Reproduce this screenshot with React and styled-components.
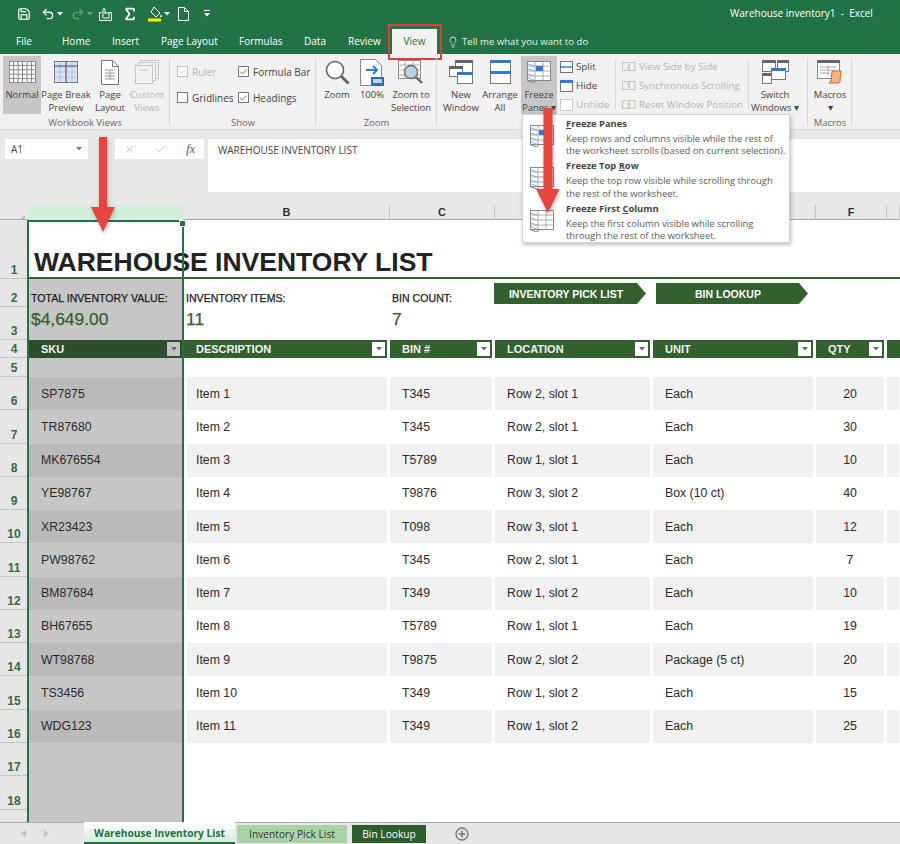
import React from 'react';
import styled, { createGlobalStyle } from 'styled-components';
import { Save, Undo2, Redo2, Sigma, Lightbulb, Check, X } from 'lucide-react';

const UI_FONT = '"Open Sans", "Noto Sans", sans-serif';
const SHEET_FONT = '"Liberation Sans", Arial, sans-serif';
const GREEN = '#217346';
const DARK = '#33602f';
const COLS = '28px 156px 206px 105px 158px 163px 71px 1fr';

const Global = createGlobalStyle`
  html, body { margin: 0; padding: 0; background: #fff; }
  * { box-sizing: border-box; }
`;

const Page = styled.div`
  position: relative;
  width: 900px;
  height: 844px;
  overflow: hidden;
  display: flex;
  flex-direction: column;
  font-family: ${UI_FONT};
  color: #444;
`;

/* title bar */
const TitleBar = styled.div`
  height: 27px;
  background: ${GREEN};
  display: flex;
  align-items: center;
  padding-left: 12px;
  color: #fff;
`;
const Qat = styled.span`
  width: ${p => p.$w}px;
  margin-left: ${p => p.$ml || 0}px;
  display: flex;
  justify-content: center;
  align-items: center;
  opacity: ${p => p.$dim ? 0.35 : 1};
`;
const DocTitle = styled.div`
  position: absolute;
  top: 6px;
  left: 730px;
  font-size: 10px;
  line-height: 14px;
  white-space: pre;
`;

/* tabs */
const TabBar = styled.div`
  height: 27px;
  background: ${GREEN};
  display: flex;
  align-items: flex-end;
  padding-left: 16px;
  font-size: 10px;
  color: #fff;
`;
const Tab = styled.div`
  width: ${p => p.$w}px;
  height: 25px;
  line-height: 24px;
  white-space: nowrap;
  text-align: ${p => p.$active ? 'center' : 'left'};
  background: ${p => p.$active ? '#f1f1f1' : 'transparent'};
  color: ${p => p.$active ? GREEN : '#fff'};
`;
const TellMe = styled.div`
  display: flex;
  align-items: center;
  gap: 3px;
  height: 25px;
  margin-left: 10px;
  font-size: 9.6px;
  color: #e4f0e8;
`;
const RedBox = styled.div`
  position: absolute;
  left: 388px;
  top: 24px;
  width: 54px;
  height: 36px;
  border: 2px solid #e33b3b;
`;

/* ribbon */
const Ribbon = styled.div`
  height: 76px;
  background: #f1f1f1;
  display: flex;
  border-bottom: 1px solid #d6d6d6;
`;
const Group = styled.div`
  width: ${p => p.$w}px;
  height: 75px;
  display: flex;
  flex-direction: column;
  position: relative;
  &::after {
    content: '';
    position: absolute;
    right: 0;
    top: 4px;
    bottom: 3px;
    width: 1px;
    background: #d8d8d8;
  }
`;
const GroupBody = styled.div`
  height: 64px;
  padding: 2px 0 0 ${p => p.$pl || 0}px;
  display: flex;
`;
const GroupLabel = styled.div`
  text-align: center;
  font-size: 9.5px;
  line-height: 13px;
  color: #666;
`;
const BigButton = styled.div`
  width: ${p => p.$w}px;
  height: 58px;
  display: flex;
  flex-direction: column;
  align-items: center;
  background: ${p => p.$on ? '#c6c6c6' : 'transparent'};
  color: ${p => p.$off ? '#b4b4b4' : '#444'};
`;
const BigIcon = styled.div`
  height: 32px;
  display: flex;
  align-items: center;
  justify-content: center;
`;
const BigText = styled.div`
  font-size: 9.5px;
  line-height: 13px;
  text-align: center;
  white-space: pre;
`;
const ChecksCol = styled.div`
  width: ${p => p.$w}px;
  padding-top: 1px;
  display: flex;
  flex-direction: column;
`;
const CheckRow = styled.div`
  height: 26px;
  padding-top: 3px;
  display: flex;
  align-items: center;
  gap: 4px;
  font-size: 10px;
  white-space: nowrap;
  color: ${p => p.$off ? '#b4b4b4' : '#444'};
`;
const Box = styled.span`
  width: 11px;
  height: 11px;
  border: 1px solid ${p => p.$off ? '#c4c4c4' : '#777'};
  background: #fff;
  display: flex;
  align-items: center;
  justify-content: center;
`;
const SmallCol = styled.div`
  width: ${p => p.$w}px;
  padding: 1px 0 0 ${p => p.$pl || 0}px;
  display: flex;
  flex-direction: column;
`;
const SmallRow = styled.div`
  height: 19px;
  display: flex;
  align-items: center;
  gap: 3px;
  font-size: 9.8px;
  white-space: nowrap;
  color: ${p => p.$off ? '#b4b4b4' : '#444'};
`;
const Divider = styled.div`
  width: 1px;
  height: 50px;
  margin-top: 4px;
  background: #dcdcdc;
`;

/* formula bar */
const FormulaArea = styled.div`
  height: 75px;
  background: #e8e8e8;
  padding-top: 9px;
  display: flex;
  align-items: flex-start;
`;
const NameBox = styled.div`
  width: 83px;
  height: 20px;
  margin-left: 5px;
  background: #fff;
  padding: 0 6px 0 6px;
  display: flex;
  align-items: center;
  justify-content: space-between;
  font-size: 10px;
`;
const FxBox = styled.div`
  width: 89px;
  height: 20px;
  margin-left: 27px;
  background: #fff;
  display: flex;
  align-items: center;
  justify-content: space-between;
  padding: 0 9px;
  color: #c4c4c4;
`;
const Fx = styled.span`
  font-family: "Liberation Serif", serif;
  font-style: italic;
  font-size: 12px;
  color: #555;
`;
const FormulaInput = styled.div`
  flex: 1;
  height: 53px;
  margin-left: 4px;
  background: #fff;
  padding: 4px 10px;
  font-size: 10px;
  line-height: 14px;
  color: #444;
`;

/* sheet */
const ColHeads = styled.div`
  height: 15px;
  background: #e8e8e8;
  display: grid;
  grid-template-columns: ${COLS};
  border-bottom: 1px solid #a9a9a9;
`;
const Corner = styled.div`
  padding: 3px 0 0 15px;
`;
const ColHead = styled.div`
  background: ${p => p.$on ? '#d2efdd' : 'transparent'};
  border-right: ${p => p.$on ? 0 : '1px solid #c6c6c6'};
  font-family: ${SHEET_FONT};
  font-size: 11px;
  font-weight: 700;
  line-height: 14px;
  text-align: center;
  color: #333;
`;
const Sheet = styled.div`
  position: relative;
  flex: 1;
  display: flex;
  flex-direction: column;
  background: #fff;
  overflow: hidden;
  font-family: ${SHEET_FONT};
`;
const Row = styled.div`
  height: ${p => p.$h}px;
  flex: ${p => p.$fill ? 1 : 'none'};
  display: grid;
  grid-template-columns: ${COLS};
`;
const RowNum = styled.div`
  background: #e6e6e6;
  border-bottom: ${p => p.$blank ? 0 : '1px solid #c4c4c4'};
  display: flex;
  align-items: flex-end;
  justify-content: center;
  padding-bottom: 1px;
  font-size: 12px;
  font-weight: 700;
  line-height: 14px;
  color: #2f6e44;
`;
const TitleCell = styled.div`
  grid-column: 2 / -1;
  border-bottom: 2px solid ${DARK};
  padding: 0 0 0 6px;
  display: flex;
  align-items: flex-end;
  font-size: 26.5px;
  font-weight: 700;
  line-height: 30px;
  color: #222;
`;
const SelCell = styled.div`
  background: ${p => p.$dark ? '#bababa' : '#c6c6c6'};
  padding-left: ${p => p.$pl || 0}px;
  display: flex;
  align-items: center;
  font-size: 12.3px;
  color: #2b2b2b;
`;
const Summary = styled.div`
  padding: ${p => p.$big ? 2 : 12}px 0 0 ${p => p.$pl || 0}px;
  font-size: ${p => p.$big ? 17.4 : 10.6}px;
  line-height: ${p => p.$big ? 20 : 14}px;
  color: ${p => p.$big ? DARK : '#1c1c1c'};
  -webkit-text-stroke: 0.25px currentColor;
  white-space: nowrap;
  background: ${p => p.$sel ? '#c6c6c6' : 'transparent'};
`;
const Empty = styled.div`
  background: ${p => p.$sel ? '#c6c6c6' : 'transparent'};
`;
const ArrowBtnCell = styled.div`
  padding: 4px 0 2px 0;
`;
const LinkButton = styled.div`
  width: 152px;
  height: 21px;
  clip-path: polygon(0 0, 143px 0, 100% 50%, 143px 100%, 0 100%);
  background: ${DARK};
  color: #fff;
  font-size: 10.5px;
  font-weight: 700;
  line-height: 22px;
  text-align: center;
  padding-right: 8px;
  margin-left: ${p => p.$ml || 0}px;
`;
const HeadCell = styled.div`
  background: ${p => p.$sel ? '#2d4f2c' : DARK};
  margin: 0 ${p => p.$mr === undefined ? 3 : p.$mr}px 0 ${p => p.$ml || 0}px;
  padding: 0 2px 0 ${p => p.$pl === undefined ? 12 : p.$pl}px;
  display: flex;
  align-items: center;
  justify-content: space-between;
  font-size: 11px;
  font-weight: 700;
  color: #f2f2f2;
  white-space: nowrap;
`;
const FilterBtn = styled.span`
  width: 13px;
  height: 14px;
  background: ${p => p.$sel ? '#c4c4c4' : '#fff'};
  display: flex;
  align-items: center;
  justify-content: center;
`;
const DataCell = styled.div`
  background: ${p => p.$band ? '#f1f1f1' : '#fff'};
  margin-right: 3px;
  margin-left: ${p => p.$ml || 0}px;
  padding-left: ${p => p.$center ? 0 : (p.$pl === undefined ? 12 : p.$pl)}px;
  display: flex;
  align-items: center;
  justify-content: ${p => p.$center ? 'center' : 'flex-start'};
  font-size: 12.3px;
  color: #2b2b2b;
  white-space: nowrap;
`;
const Selection = styled.div`
  position: absolute;
  left: 27px;
  top: 0;
  bottom: 0;
  width: 157px;
  border: solid ${GREEN};
  border-width: 2px 2px 0 2px;
  pointer-events: none;
  &::after {
    content: '';
    position: absolute;
    top: -2px;
    right: -4px;
    width: 5px;
    height: 5px;
    background: ${GREEN};
    border: 1px solid #fff;
  }
`;

/* sheet tabs */
const SheetTabs = styled.div`
  height: 22px;
  background: #e6e6e6;
  border-top: 1px solid #ababab;
  display: flex;
  align-items: stretch;
  font-size: 10.2px;
  font-family: ${UI_FONT};
  position: relative;
`;
const NavArrows = styled.div`
  width: 84px;
  padding-left: 21px;
  display: flex;
  align-items: center;
  gap: 18px;
`;
const SheetTab = styled.div`
  width: ${p => p.$w}px;
  margin-left: ${p => p.$ml || 0}px;
  margin-top: ${p => p.$active ? -1 : 2}px;
  margin-bottom: ${p => p.$active ? 0 : 1}px;
  background: ${p => p.$bg};
  color: ${p => p.$color};
  border-bottom: ${p => p.$active ? `2px solid ${GREEN}` : 0};
  font-weight: ${p => p.$active ? 700 : 400};
  text-align: center;
  line-height: ${p => p.$active ? 22 : 19}px;
  white-space: nowrap;
`;
const AddSheet = styled.div`
  margin-left: 29px;
  display: flex;
  align-items: center;
`;

/* dropdown + arrows */
const Menu = styled.div`
  position: absolute;
  left: 522px;
  top: 114px;
  width: 268px;
  height: 129px;
  background: #fff;
  border: 1px solid #d4d4d4;
  box-shadow: 1px 2px 4px rgba(0, 0, 0, 0.25);
  padding-top: 2px;
`;
const MenuItem = styled.div`
  height: 42.4px;
  display: flex;
`;
const MenuIcon = styled.div`
  width: 43px;
  padding: 8px 0 0 7px;
`;
const MenuBody = styled.div`
  font-size: 9.4px;
  line-height: 12.4px;
  color: #5c5c5c;
  white-space: nowrap;
`;
const MenuTitle = styled.div`
  font-weight: 700;
  color: #444;
  line-height: 14px;
  margin-bottom: 2px;
  & u { text-underline-offset: 1px; }
`;
const Arrow = styled.svg`
  position: absolute;
  left: ${p => p.$x}px;
  top: ${p => p.$y}px;
  filter: drop-shadow(1px 2px 2px rgba(0,0,0,.25));
`;

const caret = (color = '#fff') => (
  <svg width="6" height="4" viewBox="0 0 6 4"><path d="M0 0h6L3 3.5z" fill={color} /></svg>
);

function SheetGrid({ w = 27, h = 22, color = '#8a8a8a', fillTop }) {
  const cols = [1, 2, 3, 4, 5].map(i => (w * i) / 6);
  const rows = [1, 2, 3, 4].map(i => (h * i) / 5);
  return (
    <svg width={w} height={h}>
      <rect x=".5" y=".5" width={w - 1} height={h - 1} fill={fillTop || '#fff'} stroke={color} />
      {cols.map(x => <line key={x} x1={x} x2={x} y1="0" y2={h} stroke={color} />)}
      {rows.map(y => <line key={y} y1={y} y2={y} x1="0" x2={w} stroke={color} />)}
    </svg>
  );
}

function PageBreakIcon() {
  return (
    <svg width="24" height="22">
      <rect x=".5" y=".5" width="23" height="21" fill="#d6e4f5" stroke="#777" />
      <path d="M12 0v22M0 6h24M0 11h24M0 16h24M6 0v22M18 0v22" stroke="#9fb7d3" strokeWidth=".7" />
      <path d="M12 0v22M0 5h24" stroke="#555" />
    </svg>
  );
}

function DocIcon() {
  return (
    <svg width="18" height="25">
      <path d="M.5.5h11l6 6v18H.5z" fill="#fff" stroke="#777" />
      <path d="M11.500.5v6h6" fill="none" stroke="#777" />
      <path d="M4 10h10M4 13h10M4 16h10M4 19h10M9 10v9" stroke="#999" />
    </svg>
  );
}

function CustomViewsIcon() {
  return (
    <svg width="24" height="24" stroke="#c6c6c6" fill="none">
      <rect x="5.5" y=".5" width="18" height="18" />
      <rect x="3.5" y="2.5" width="17" height="18" fill="#f1f1f1" />
      <rect x=".5" y="5.5" width="17" height="18" fill="#f1f1f1" />
      <path d="M4 10h10" />
    </svg>
  );
}

function MagnifierIcon() {
  return (
    <svg width="25" height="25" fill="none">
      <circle cx="10" cy="10" r="8.5" stroke="#666" strokeWidth="1.6" fill="#fff" />
      <path d="M16 16l7.5 7.5" stroke="#666" strokeWidth="3" />
    </svg>
  );
}

function HundredIcon() {
  return (
    <svg width="24" height="27">
      <path d="M.5.5h15l6 6v20H.5z" fill="#fff" stroke="#888" />
      <path d="M6 11h11M13 7l4 4-4 4" fill="none" stroke="#2b7cd3" strokeWidth="2" />
      <rect x="11" y="18" width="13" height="9" fill="#2b6fb5" />
      <rect x="13" y="20" width="9" height="4" fill="#bcd4ee" />
    </svg>
  );
}

function ZoomSelIcon() {
  return (
    <svg width="26" height="25" fill="none">
      <rect x=".5" y=".5" width="22" height="18" fill="#fff" stroke="#888" />
      <path d="M0 5h23M0 10h23M0 15h23M7 0v19M15 0v19" stroke="#aaa" />
      <circle cx="13" cy="12" r="6.5" fill="#b8d2ec" stroke="#666" strokeWidth="1.3" />
      <path d="M18 17l6 6" stroke="#666" strokeWidth="2.4" />
    </svg>
  );
}

function NewWindowIcon() {
  return (
    <svg width="24" height="24">
      <rect x="6.5" y=".5" width="17" height="12" fill="#fff" stroke="#777" />
      <rect x="6" y="0" width="18" height="3" fill="#666" />
      <rect x=".5" y="6.5" width="13" height="10" fill="#fff" stroke="#777" />
      <rect x="0" y="6" width="14" height="3" fill="#666" />
      <rect x="8.5" y="13.5" width="15" height="10" fill="#fff" stroke="#777" />
      <rect x="8" y="12" width="16" height="3" fill="#2b7cd3" />
    </svg>
  );
}

function ArrangeIcon() {
  return (
    <svg width="21" height="24">
      <rect x=".5" y=".5" width="20" height="23" fill="#fff" stroke="#777" />
      <rect x="0" y="0" width="21" height="3" fill="#2b7cd3" />
      <rect x="0" y="11" width="21" height="3" fill="#2b7cd3" />
    </svg>
  );
}

function FreezeIcon({ w = 24, h = 22, mark = 'center' }) {
  return (
    <svg width={w} height={h} viewBox="0 0 24 22">
      <rect x=".5" y=".5" width="23" height="19" fill="#fff" stroke="#888" />
      <path d="M8 0v20M16 0v20M0 5h24M0 10h24M0 15h24" stroke="#999" strokeWidth=".8" />
      <path d="M1 3l6 2M1 8l6 2M1 13l6 2M1 17l6 2" stroke="#6aa0d8" strokeWidth=".8" />
      {mark === 'center' && <rect x="9" y="5" width="7" height="5" fill="#2b7cd3" />}
      <path d="M1 20l6 2 2-2" fill="none" stroke="#888" />
    </svg>
  );
}

function SmallPane({ bar, off }) {
  const c = off ? '#c9c9c9' : '#777';
  return (
    <svg width="13" height="12">
      <rect x=".5" y=".5" width="12" height="11" fill="#fff" stroke={c} />
      {bar === 'split' && <path d="M0 6h13" stroke="#2b7cd3" strokeWidth="1.4" />}
      {bar === 'hide' && <rect width="13" height="3" fill="#2b7cd3" />}
    </svg>
  );
}

function OffDocs() {
  return (
    <svg width="14" height="11" fill="none" stroke="#c6c6c6">
      <rect x=".5" y="1.5" width="5.5" height="8" />
      <rect x="7.5" y="1.5" width="5.5" height="8" />
    </svg>
  );
}

function SwitchIcon() {
  return (
    <svg width="27" height="25">
      <rect x=".5" y=".5" width="13" height="11" fill="#fff" stroke="#777" />
      <rect width="14" height="3" fill="#666" />
      <rect x="15.5" y=".5" width="11" height="11" fill="#fff" stroke="#777" />
      <rect x="15" width="12" height="3" fill="#666" />
      <rect x=".5" y="13.5" width="9" height="10" fill="#fff" stroke="#777" />
      <rect y="13" width="10" height="3" fill="#666" />
      <rect x="9.5" y="8.5" width="14" height="11" fill="#fff" stroke="#777" />
      <rect x="9" y="8" width="15" height="3" fill="#2b7cd3" />
    </svg>
  );
}

function MacrosIcon() {
  return (
    <svg width="26" height="24">
      <rect x=".5" y=".5" width="22" height="18" fill="#fff" stroke="#888" />
      <rect width="23" height="3" fill="#666" />
      <path d="M3 7h16M3 10h16M3 13h10M11 5v10" stroke="#aaa" />
      <path d="M15 11h9l-1 10q0 2-2 2h-9q2 0 2-3z" fill="#f3b183" stroke="#d2691e" />
    </svg>
  );
}

const ROWS = [
  ['SP7875', 'Item 1', 'T345', 'Row 2, slot 1', 'Each', '20'],
  ['TR87680', 'Item 2', 'T345', 'Row 2, slot 1', 'Each', '30'],
  ['MK676554', 'Item 3', 'T5789', 'Row 1, slot 1', 'Each', '10'],
  ['YE98767', 'Item 4', 'T9876', 'Row 3, slot 2', 'Box (10 ct)', '40'],
  ['XR23423', 'Item 5', 'T098', 'Row 3, slot 1', 'Each', '12'],
  ['PW98762', 'Item 6', 'T345', 'Row 2, slot 1', 'Each', '7'],
  ['BM87684', 'Item 7', 'T349', 'Row 1, slot 2', 'Each', '10'],
  ['BH67655', 'Item 8', 'T5789', 'Row 1, slot 1', 'Each', '19'],
  ['WT98768', 'Item 9', 'T9875', 'Row 2, slot 2', 'Package (5 ct)', '20'],
  ['TS3456', 'Item 10', 'T349', 'Row 1, slot 2', 'Each', '15'],
  ['WDG123', 'Item 11', 'T349', 'Row 1, slot 2', 'Each', '25'],
];

const TABS = [
  ['File', 46], ['Home', 50], ['Insert', 49], ['Page Layout', 78],
  ['Formulas', 65], ['Data', 44], ['Review', 44],
];

export default function App() {
  return (
    <Page>
      <Global />
      <TitleBar>
        <Qat $w={24}><Save size={14} strokeWidth={2} /></Qat>
        <Qat $w={18} $ml={3}><Undo2 size={14} strokeWidth={2.2} /></Qat>
        <Qat $w={6}>{caret()}</Qat>
        <Qat $w={18} $ml={6} $dim><Redo2 size={14} /></Qat>
        <Qat $w={6} $dim>{caret()}</Qat>
        <Qat $w={20} $ml={2}>
          <svg width="15" height="14" fill="none" stroke="#fff"><path d="M1.500 5.500h2M11 5.500h2.500v8h-12v-8M5 9V2.500a1 1 0 0 1 2 0V7m0-1h4v5H5.500L4 8.500" /></svg>
        </Qat>
        <Qat $w={20} $ml={5}><Sigma size={16} strokeWidth={2.6} /></Qat>
        <Qat $w={18} $ml={6}>
          <svg width="15" height="16"><path d="M6 1l6 6-4 4-5-5z" fill="none" stroke="#fff" /><path d="M13 8l1 3h-2z" fill="#fff" /><rect y="12.500" width="13" height="3" fill="#ffef00" /></svg>
        </Qat>
        <Qat $w={6}>{caret()}</Qat>
        <Qat $w={18} $ml={4}>
          <svg width="11" height="14" fill="none" stroke="#fff"><path d="M.5.5h6l4 4v9H.5zM6.500.5v4h4" /></svg>
        </Qat>
        <Qat $w={10} $ml={10}>
          <svg width="6" height="7" fill="#fff"><rect width="6" height="1" /><path d="M0 3h6L3 6.500z" /></svg>
        </Qat>
        <DocTitle>Warehouse inventory1  -  Excel</DocTitle>
      </TitleBar>

      <TabBar>
        {TABS.map(([name, w]) => <Tab key={name} $w={w}>{name}</Tab>)}
        <Tab $w={45} $active>View</Tab>
        <TellMe>
          <Lightbulb size={12} strokeWidth={1.6} />
          <span>Tell me what you want to do</span>
        </TellMe>
      </TabBar>
      <RedBox />

      <Ribbon>
        <Group $w={170}>
          <GroupBody $pl={3}>
            <BigButton $w={38} $on>
              <BigIcon><SheetGrid /></BigIcon>
              <BigText>Normal</BigText>
            </BigButton>
            <BigButton $w={50}>
              <BigIcon><PageBreakIcon /></BigIcon>
              <BigText>{'Page Break\nPreview'}</BigText>
            </BigButton>
            <BigButton $w={38}>
              <BigIcon><DocIcon /></BigIcon>
              <BigText>{'Page\nLayout'}</BigText>
            </BigButton>
            <BigButton $w={36} $off>
              <BigIcon><CustomViewsIcon /></BigIcon>
              <BigText>{'Custom\nViews'}</BigText>
            </BigButton>
          </GroupBody>
          <GroupLabel>Workbook Views</GroupLabel>
        </Group>

        <Group $w={146}>
          <GroupBody $pl={7}>
            <ChecksCol $w={61}>
              <CheckRow $off><Box $off><Check size={9} color="#c4c4c4" strokeWidth={2} /></Box>Ruler</CheckRow>
              <CheckRow><Box />Gridlines</CheckRow>
            </ChecksCol>
            <ChecksCol $w={70}>
              <CheckRow><Box><Check size={10} color="#444" strokeWidth={2} /></Box>Formula Bar</CheckRow>
              <CheckRow><Box><Check size={10} color="#444" strokeWidth={2} /></Box>Headings</CheckRow>
            </ChecksCol>
          </GroupBody>
          <GroupLabel>Show</GroupLabel>
        </Group>

        <Group $w={121}>
          <GroupBody $pl={4}>
            <BigButton $w={34}>
              <BigIcon><MagnifierIcon /></BigIcon>
              <BigText>Zoom</BigText>
            </BigButton>
            <BigButton $w={36}>
              <BigIcon><HundredIcon /></BigIcon>
              <BigText>100%</BigText>
            </BigButton>
            <BigButton $w={42}>
              <BigIcon><ZoomSelIcon /></BigIcon>
              <BigText>{'Zoom to\nSelection'}</BigText>
            </BigButton>
          </GroupBody>
          <GroupLabel>Zoom</GroupLabel>
        </Group>

        <Group $w={371}>
          <GroupBody $pl={6}>
            <BigButton $w={36}>
              <BigIcon><NewWindowIcon /></BigIcon>
              <BigText>{'New\nWindow'}</BigText>
            </BigButton>
            <BigButton $w={42}>
              <BigIcon><ArrangeIcon /></BigIcon>
              <BigText>{'Arrange\nAll'}</BigText>
            </BigButton>
            <BigButton $w={36} $on>
              <BigIcon><FreezeIcon /></BigIcon>
              <BigText>{'Freeze\nPanes ▾'}</BigText>
            </BigButton>
            <SmallCol $w={58} $pl={3}>
              <SmallRow><SmallPane bar="split" />Split</SmallRow>
              <SmallRow><SmallPane bar="hide" />Hide</SmallRow>
              <SmallRow $off><SmallPane off />Unhide</SmallRow>
            </SmallCol>
            <Divider />
            <SmallCol $w={132} $pl={6}>
              <SmallRow $off><OffDocs />View Side by Side</SmallRow>
              <SmallRow $off><OffDocs />Synchronous Scrolling</SmallRow>
              <SmallRow $off><OffDocs />Reset Window Position</SmallRow>
            </SmallCol>
            <Divider />
            <BigButton $w={52}>
              <BigIcon><SwitchIcon /></BigIcon>
              <BigText>{'Switch\nWindows ▾'}</BigText>
            </BigButton>
          </GroupBody>
        </Group>

        <Group $w={44}>
          <GroupBody>
            <BigButton $w={44}>
              <BigIcon><MacrosIcon /></BigIcon>
              <BigText>{'Macros\n▾'}</BigText>
            </BigButton>
          </GroupBody>
          <GroupLabel>Macros</GroupLabel>
        </Group>
      </Ribbon>

      <FormulaArea>
        <NameBox>A1 {caret('#777')}</NameBox>
        <FxBox>
          <X size={11} strokeWidth={2} />
          <Check size={11} strokeWidth={2} />
          <Fx>fx</Fx>
        </FxBox>
        <FormulaInput>WAREHOUSE INVENTORY LIST</FormulaInput>
      </FormulaArea>

      <ColHeads>
        <Corner><svg width="10" height="10"><path d="M10 0v10H0z" fill="#b4b4b4" /></svg></Corner>
        <ColHead $on />
        <ColHead>B</ColHead>
        <ColHead>C</ColHead>
        <ColHead />
        <ColHead />
        <ColHead>F</ColHead>
        <ColHead />
      </ColHeads>

      <Sheet>
        <Row $h={59}>
          <RowNum>1</RowNum>
          <TitleCell>WAREHOUSE INVENTORY LIST</TitleCell>
        </Row>
        <Row $h={28}>
          <RowNum>2</RowNum>
          <Summary $sel $pl={3}>TOTAL INVENTORY VALUE:</Summary>
          <Summary $pl={2}>INVENTORY ITEMS:</Summary>
          <Summary $pl={2}>BIN COUNT:</Summary>
          <ArrowBtnCell><LinkButton $ml={-1}>INVENTORY PICK LIST</LinkButton></ArrowBtnCell>
          <ArrowBtnCell><LinkButton $ml={3}>BIN LOOKUP</LinkButton></ArrowBtnCell>
          <Empty />
          <Empty />
        </Row>
        <Row $h={33}>
          <RowNum>3</RowNum>
          <Summary $sel $big $pl={3}>$4,649.00</Summary>
          <Summary $big $pl={2}>11</Summary>
          <Summary $big $pl={2}>7</Summary>
          <Empty /><Empty /><Empty /><Empty />
        </Row>
        <Row $h={18}>
          <RowNum>4</RowNum>
          <HeadCell $sel $ml={1} $mr={2} $pl={12}>SKU<FilterBtn $sel>{caret('#666')}</FilterBtn></HeadCell>
          <HeadCell>DESCRIPTION<FilterBtn>{caret('#666')}</FilterBtn></HeadCell>
          <HeadCell>BIN #<FilterBtn>{caret('#666')}</FilterBtn></HeadCell>
          <HeadCell>LOCATION<FilterBtn>{caret('#666')}</FilterBtn></HeadCell>
          <HeadCell>UNIT<FilterBtn>{caret('#666')}</FilterBtn></HeadCell>
          <HeadCell>QTY<FilterBtn>{caret('#666')}</FilterBtn></HeadCell>
          <HeadCell $pl={0} $mr={0} />
        </Row>
        <Row $h={19}>
          <RowNum>5</RowNum>
          <Empty $sel /><Empty /><Empty /><Empty /><Empty /><Empty /><Empty />
        </Row>
        {ROWS.map((r, i) => {
          const band = i % 2 === 0;
          return (
            <Row $h={33.27} key={r[0]}>
              <RowNum>{i + 6}</RowNum>
              <SelCell $dark={band} $pl={13}>{r[0]}</SelCell>
              <DataCell $band={band} $ml={3} $pl={9}>{r[1]}</DataCell>
              <DataCell $band={band}>{r[2]}</DataCell>
              <DataCell $band={band}>{r[3]}</DataCell>
              <DataCell $band={band}>{r[4]}</DataCell>
              <DataCell $band={band} $center>{r[5]}</DataCell>
              <DataCell $band={band} />
            </Row>
          );
        })}
        {[17, 18].map(n => (
          <Row $h={33.3} key={n}>
            <RowNum>{n}</RowNum>
            <Empty $sel /><Empty /><Empty /><Empty /><Empty /><Empty /><Empty />
          </Row>
        ))}
        <Row $fill>
          <RowNum $blank />
          <Empty $sel /><Empty /><Empty /><Empty /><Empty /><Empty /><Empty />
        </Row>
        <Selection />
      </Sheet>

      <SheetTabs>
        <NavArrows>
          <svg width="5" height="7"><path d="M5 0v7L0 3.500z" fill="#c4c4c4" /></svg>
          <svg width="5" height="7"><path d="M0 0v7l5-3.500z" fill="#c4c4c4" /></svg>
        </NavArrows>
        <SheetTab $w={151} $active $bg="linear-gradient(#fff, #d6eedd)" $color={GREEN}>Warehouse Inventory List</SheetTab>
        <SheetTab $w={110} $ml={2} $bg="#a9d3a5" $color="#333">Inventory Pick List</SheetTab>
        <SheetTab $w={74} $ml={5} $bg="#2f5c2c" $color="#fff">Bin Lookup</SheetTab>
        <AddSheet>
          <svg width="14" height="14" fill="none" stroke="#777"><circle cx="7" cy="7" r="6" strokeWidth="1.3" /><path d="M7 3.500v7M3.500 7h7" strokeWidth="1.6" /></svg>
        </AddSheet>
      </SheetTabs>

      <Menu>
        <MenuItem>
          <MenuIcon><FreezeIcon /></MenuIcon>
          <MenuBody>
            <MenuTitle><u>F</u>reeze Panes</MenuTitle>
            Keep rows and columns visible while the rest of<br />
            the worksheet scrolls (based on current selection).
          </MenuBody>
        </MenuItem>
        <MenuItem>
          <MenuIcon><FreezeIcon mark="none" /></MenuIcon>
          <MenuBody>
            <MenuTitle>Freeze Top <u>R</u>ow</MenuTitle>
            Keep the top row visible while scrolling through<br />
            the rest of the worksheet.
          </MenuBody>
        </MenuItem>
        <MenuItem>
          <MenuIcon><FreezeIcon mark="none" /></MenuIcon>
          <MenuBody>
            <MenuTitle>Freeze First <u>C</u>olumn</MenuTitle>
            Keep the first column visible while scrolling<br />
            through the rest of the worksheet.
          </MenuBody>
        </MenuItem>
      </Menu>

      <Arrow $x={90} $y={136} width="26" height="98" viewBox="0 0 26 98">
        <path d="M9 1h8v70h8L13 96 1 71h8z" fill="#e8453f" />
      </Arrow>
      <Arrow $x={535} $y={107} width="26" height="108" viewBox="0 0 26 108">
        <path d="M8.500 1h9v81h7L13 106 1 82h7.500z" fill="#e8453f" />
      </Arrow>
    </Page>
  );
}
